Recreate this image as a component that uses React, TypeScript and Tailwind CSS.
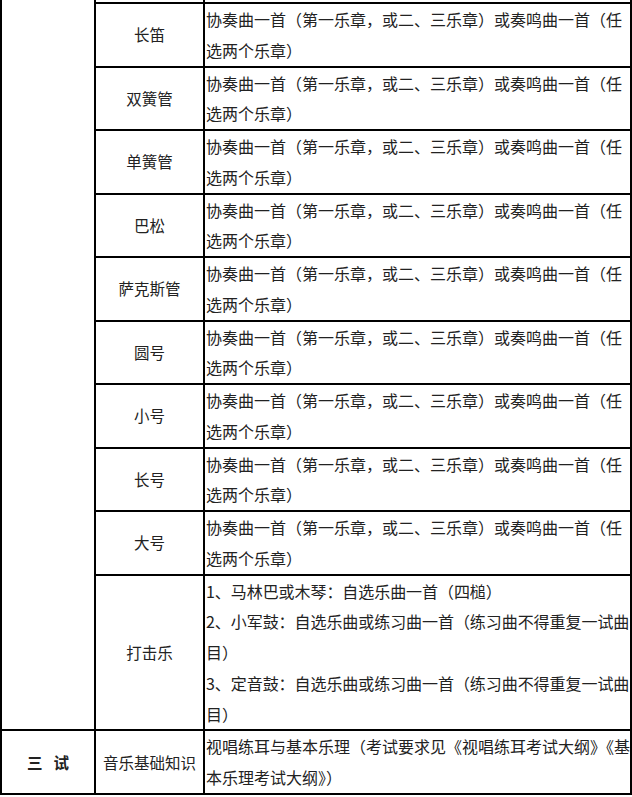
const piece = ["协奏曲一首（第一乐章，或二、三乐章）或奏鸣曲一首（任", "选两个乐章）"];

const instruments = ["长笛", "双簧管", "单簧管", "巴松", "萨克斯管", "圆号", "小号", "长号", "大号"];

const percussion = [
  "1、马林巴或木琴：自选乐曲一首（四槌）",
  "2、小军鼓：自选乐曲或练习曲一首（练习曲不得重复一试曲",
  "目）",
  "3、定音鼓：自选乐曲或练习曲一首（练习曲不得重复一试曲",
  "目）",
];

const theory = ["视唱练耳与基本乐理（考试要求见《视唱练耳考试大纲》《基", "本乐理考试大纲》）"];

function Lines({ lines, tight }: { lines: string[]; tight?: boolean }) {
  return (
    <div className={"bg-white pl-[1px] overflow-hidden " + (tight ? "tracking-[-0.06px]" : "")}>
      {lines.map((l, i) => (
        <div key={i} className="whitespace-nowrap">
          {l}
        </div>
      ))}
    </div>
  );
}

function NameCell({ children }: { children: React.ReactNode }) {
  return <div className="bg-white flex items-center justify-center text-[15.5px]">{children}</div>;
}

export default function App() {
  return (
    <div
      className="w-[632px] bg-black grid grid-cols-[92px_107px_1fr] gap-[2px] px-[2px] pb-[2px] text-[16px] leading-[30.75px] text-[#222]"
      style={{ fontFamily: '"Noto Sans CJK SC", "Noto Sans", sans-serif' }}
    >
      <div className="bg-white row-span-11" />
      <div className="bg-white h-[2px]" />
      <div className="bg-white h-[2px]" />

      {instruments.map((name) => (
        <>
          <NameCell key={name + "-n"}>{name}</NameCell>
          <Lines key={name + "-t"} lines={piece} />
        </>
      ))}

      <NameCell>打击乐</NameCell>
      <Lines lines={percussion} tight />

      <div className="bg-white flex items-center justify-center gap-[11px] font-bold text-[15.5px]">
        <span>三</span>
        <span>试</span>
      </div>
      <NameCell>音乐基础知识</NameCell>
      <Lines lines={theory} />
    </div>
  );
}
